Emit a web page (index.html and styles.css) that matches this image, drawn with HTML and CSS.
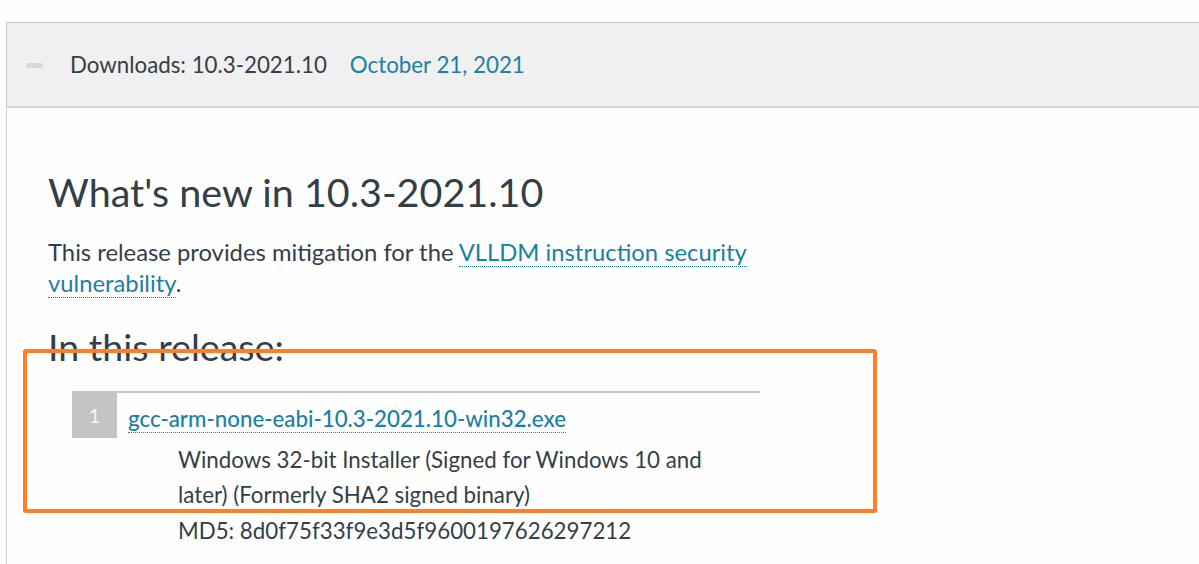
FILE: index.html
```html
<!DOCTYPE html>
<html>
<head>
<meta charset="utf-8">
<link rel="stylesheet" href="styles.css">
</head>
<body>
<div class="panel">
  <div class="panel-header">
    <span class="minus"></span>
    <span class="title">Downloads: 10.3-2021.10</span>
    <span class="date">October 21, 2021</span>
  </div>
  <div class="content">
    <h2 class="whatsnew">What's new in 10.3-2021.10</h2>
    <p class="intro">This release provides mitigation for the <a class="dl" href="#">VLLDM instruction security vulnerability</a>.</p>
    <h3 class="release">In this release:</h3>
    <ol class="files">
      <li class="file">
        <span class="num">1</span>
        <div class="file-body">
          <a class="dl file-link" href="#">gcc-arm-none-eabi-10.3-2021.10-win32.exe</a>
          <div class="desc">Windows 32-bit Installer (Signed for Windows 10 and later) (Formerly SHA2 signed binary)</div>
          <div class="md5">MD5: 8d0f75f33f9e3d5f9600197626297212</div>
        </div>
      </li>
    </ol>
  </div>
</div>
<div class="highlight"></div>
</body>
</html>
```
FILE: styles.css
```css
html, body {
  margin: 0;
  padding: 0;
  background: #fefefe;
  overflow: hidden;
}
body {
  font-family: Lato, "Open Sans", sans-serif;
  color: #333e48;
  height: 564px;
  position: relative;
}
.panel {
  margin-top: 22px;
  margin-left: 6px;
  border-left: 1px solid #cccccc;
  border-top: 1px solid #c6c6c6;
  height: 600px;
}
.panel-header {
  background: #f0f0f0;
  height: 83px;
  border-bottom: 2px solid #d4d4d4;
  display: flex;
  align-items: center;
  padding-left: 19px;
  font-size: 22.3px;
}
.minus {
  width: 17px;
  height: 5px;
  border-radius: 2.5px;
  background: #d9d9d9;
  margin-right: 27px;
  margin-top: 1px;
}
.title {
  color: #333e48;
}
.date {
  color: #1b80a6;
  margin-left: 23px;
}
.content {
  padding-left: 41px;
}
.whatsnew {
  font-size: 39.5px;
  font-weight: 400;
  margin: 60px 0 0 0;
  line-height: 48px;
}
.intro {
  font-size: 23.8px;
  line-height: 31px;
  margin: 21px 0 0 0;
  width: 720px;
}
a.dl {
  color: #1b80a6;
  text-decoration: none;
  border-bottom: 1px dotted #1b80a6;
}
.release {
  font-size: 37.6px;
  font-weight: 400;
  line-height: 46px;
  margin: 25px 0 0 0;
}
.files {
  list-style: none;
  margin: 21px 0 0 0;
  padding: 0 0 0 24px;
}
.file {
  display: flex;
  align-items: flex-start;
}
.num {
  width: 45px;
  height: 47px;
  background: #c4c4c4;
  color: #f4f4f4;
  font-size: 20px;
  display: flex;
  align-items: center;
  justify-content: center;
  flex: none;
}
.file-body {
  box-sizing: border-box;
  width: 643px;
  border-top: 2px solid #c4c4c4;
  padding-left: 11px;
  font-size: 22.3px;
}
.file-link {
  display: inline-block;
  margin-top: 13px;
  line-height: 26px;
  font-weight: 500;
}
.desc {
  margin-left: 50px;
  width: 540px;
  line-height: 35px;
  margin-top: 9px;
}
.md5 {
  margin-left: 50px;
  line-height: 35px;
  margin-top: 1px;
}
.highlight {
  position: absolute;
  left: 23px;
  top: 349px;
  width: 846px;
  height: 156px;
  border: 4px solid #ff7f27;
  border-radius: 3px;
}
```
